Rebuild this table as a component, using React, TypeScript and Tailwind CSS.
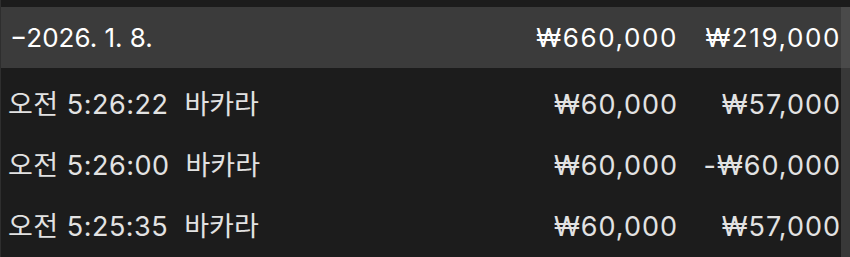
import React from "react";

const rows = [
  { time: "오전 5:26:22", game: "바카라", bet: "₩60,000", result: "₩57,000" },
  { time: "오전 5:26:00", game: "바카라", bet: "₩60,000", result: "-₩60,000" },
  { time: "오전 5:25:35", game: "바카라", bet: "₩60,000", result: "₩57,000" },
];

export default function App() {
  return (
    <div
      className="w-[850px] h-[257px] overflow-hidden bg-[#1c1c1c] flex"
      style={{ fontFamily: '"Inter", "Noto Sans CJK KR", sans-serif' }}
    >
      <div className="flex-1 flex flex-col pt-[7px] border-l border-[#2e2e2e]">
        <div className="h-[61px] shrink-0 bg-[#3b3b3b] flex items-center pl-[9px] text-[26px] text-white">
          <span className="flex-1">−2026. 1. 8.</span>
          <span className="w-[150px] text-right tracking-[1.6px]">₩660,000</span>
          <span className="w-[163px] text-right tracking-[1.6px]">₩219,000</span>
        </div>
        <div className="pt-[7px] flex flex-col">
          {rows.map((r, i) => (
            <div key={i} className="h-[61px] flex items-center pl-[7px] text-[27px] text-[#e2e2e2]">
              <span className="flex-1 flex gap-[16px]">
                <span className="tracking-[0.5px]">{r.time}</span>
                <span>{r.game}</span>
              </span>
              <span className="w-[150px] text-right tracking-[1px]">{r.bet}</span>
              <span className="w-[163px] text-right tracking-[1px]">{r.result}</span>
            </div>
          ))}
        </div>
      </div>
      <div className="w-[9px] flex flex-col pt-[7px]">
        <div className="h-[61px] bg-[#4a4a4a]" />
        <div className="flex-1 bg-[#383838]" />
      </div>
    </div>
  );
}
